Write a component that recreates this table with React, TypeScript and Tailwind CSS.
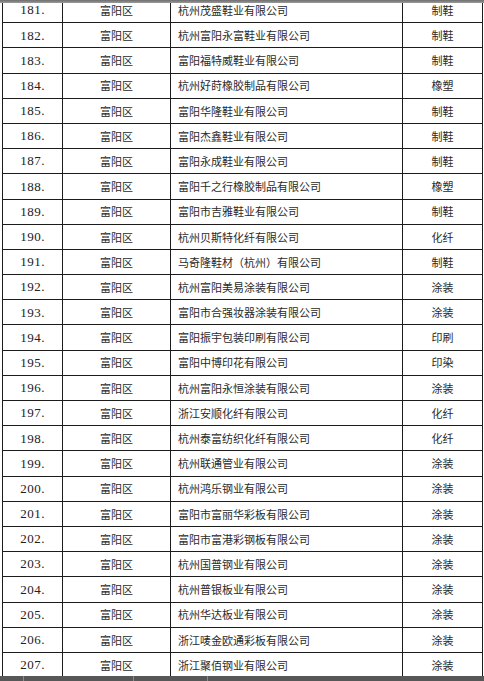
import React from "react";

const rows: [string, string, string][] = [
  ["181.", "杭州茂盛鞋业有限公司", "制鞋"],
  ["182.", "杭州富阳永富鞋业有限公司", "制鞋"],
  ["183.", "富阳福特威鞋业有限公司", "制鞋"],
  ["184.", "杭州好莳橡胶制品有限公司", "橡塑"],
  ["185.", "富阳华隆鞋业有限公司", "制鞋"],
  ["186.", "富阳杰鑫鞋业有限公司", "制鞋"],
  ["187.", "富阳永成鞋业有限公司", "制鞋"],
  ["188.", "富阳千之行橡胶制品有限公司", "橡塑"],
  ["189.", "富阳市吉雅鞋业有限公司", "制鞋"],
  ["190.", "杭州贝斯特化纤有限公司", "化纤"],
  ["191.", "马奇隆鞋材（杭州）有限公司", "制鞋"],
  ["192.", "杭州富阳美易涂装有限公司", "涂装"],
  ["193.", "富阳市合强妆器涂装有限公司", "涂装"],
  ["194.", "富阳振宇包装印刷有限公司", "印刷"],
  ["195.", "富阳中博印花有限公司", "印染"],
  ["196.", "杭州富阳永恒涂装有限公司", "涂装"],
  ["197.", "浙江安顺化纤有限公司", "化纤"],
  ["198.", "杭州泰富纺织化纤有限公司", "化纤"],
  ["199.", "杭州联通管业有限公司", "涂装"],
  ["200.", "杭州鸿乐钢业有限公司", "涂装"],
  ["201.", "富阳市富丽华彩板有限公司", "涂装"],
  ["202.", "富阳市富港彩钢板有限公司", "涂装"],
  ["203.", "杭州国普钢业有限公司", "涂装"],
  ["204.", "杭州普银板业有限公司", "涂装"],
  ["205.", "杭州华达板业有限公司", "涂装"],
  ["206.", "浙江唛金欧通彩板有限公司", "涂装"],
  ["207.", "浙江聚佰钢业有限公司", "涂装"],
];

const cjk = "font-['Noto_Sans_CJK_SC','Noto_Sans',sans-serif]";

export default function App() {
  return (
    <div className="relative w-[484px] h-[681px] overflow-hidden bg-white">
      <div className="ml-[2px] -mt-[3px] w-[481px] border-l border-[#1c1c1c]">
        {rows.map(([n, name, cat]) => (
          <div
            key={n}
            className="grid grid-cols-[60px_108px_232px_80px] h-[25.2px] border-t border-[#1c1c1c]"
          >
            <div className="flex items-center justify-center border-r border-[#1c1c1c] font-['Liberation_Serif',serif] text-[13px] text-[#222] tracking-[0.5px]">
              {n}
            </div>
            <div className={`flex items-center justify-center border-r border-[#1c1c1c] text-[11px] text-[#2a2a2a] ${cjk}`}>
              富阳区
            </div>
            <div className={`flex items-center pl-[7px] border-r border-[#1c1c1c] text-[11px] text-[#2a2a2a] ${cjk}`}>
              {name}
            </div>
            <div className={`flex items-center justify-center border-r border-[#1c1c1c] text-[11px] text-[#2a2a2a] ${cjk}`}>
              {cat}
            </div>
          </div>
        ))}
      </div>
      <div className="absolute left-0 top-0 w-full h-[3px] bg-gradient-to-b from-[#6e6e6e] to-[#9a9a9a]" />
      <div className="absolute left-0 bottom-0 w-full h-[5px] bg-[#575757]">
        <div className="absolute left-[23px] top-0 h-full w-px bg-[#8a8a8a]" />
        <div className="absolute left-[133px] top-0 h-full w-px bg-[#8a8a8a]" />
        <div className="absolute left-[207px] top-0 h-full w-px bg-[#8a8a8a]" />
      </div>
    </div>
  );
}
